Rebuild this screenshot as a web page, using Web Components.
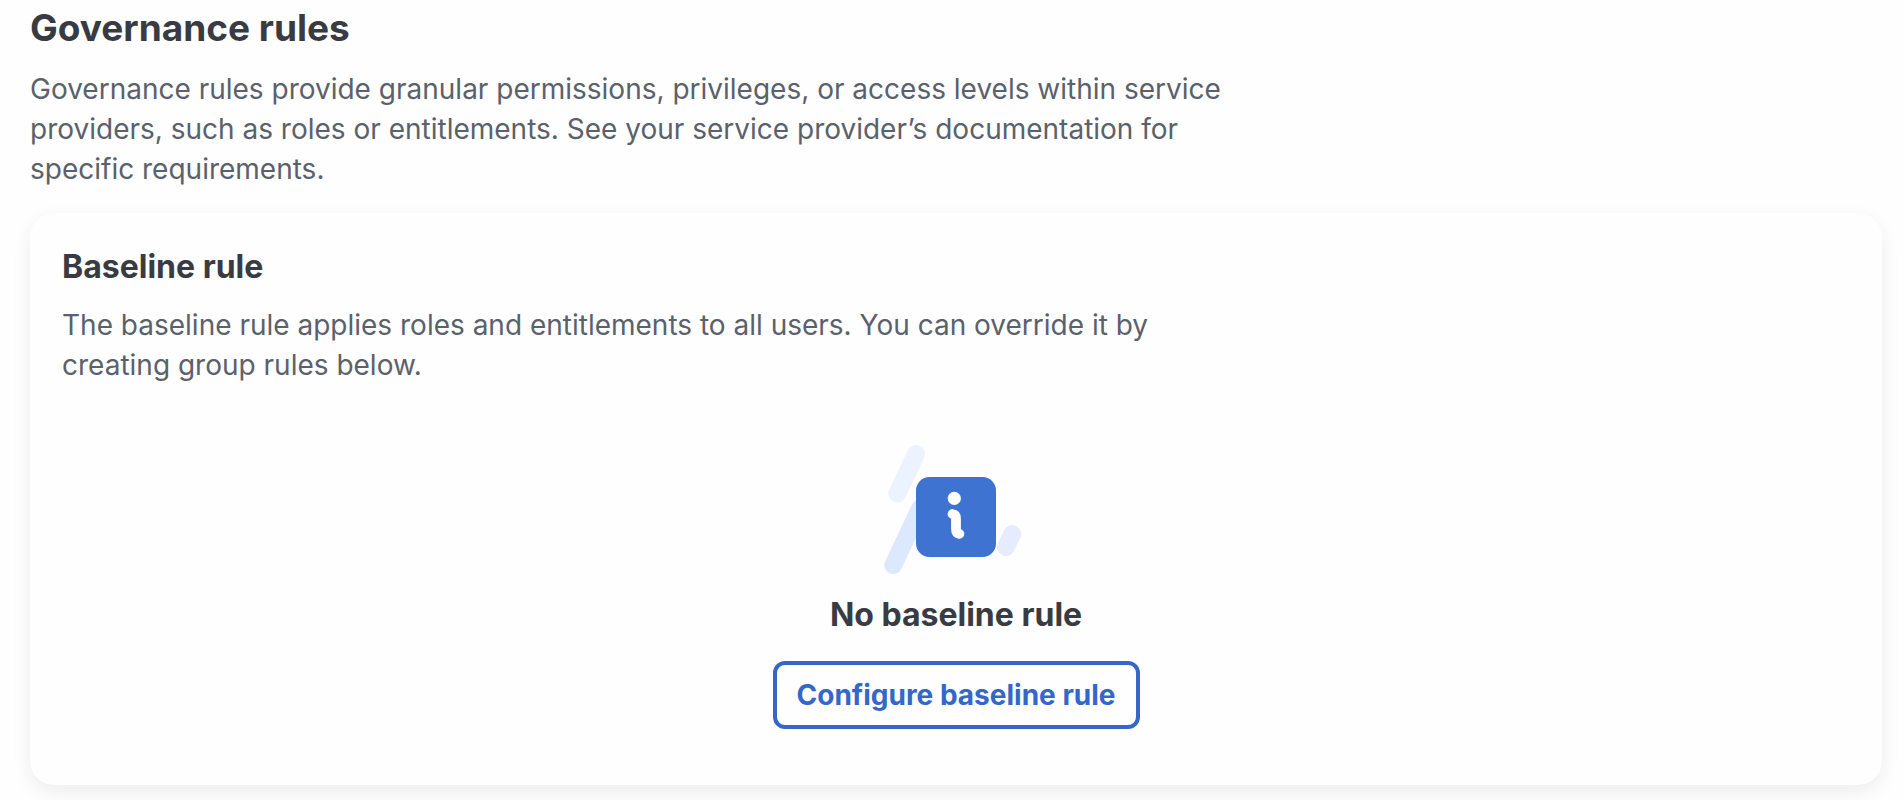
<!DOCTYPE html>
<html lang="en">
<head>
<meta charset="utf-8">
<meta name="viewport" content="width=device-width, initial-scale=1">
<title>Governance rules</title>
<style>
  body {
    margin: 0;
    background: #fefefe;
    color: #5b616b;
    font: 400 28px/40px Inter, "Liberation Sans", sans-serif;
    --heading: #393b42;
    --accent: #3467c8;
  }
</style>
</head>
<body>
<rules-section>
  <span slot="title">Governance rules</span>
  <span slot="description">Governance rules provide granular permissions, privileges, or access levels within service providers, such as roles or entitlements. See your service provider’s documentation for specific requirements.</span>
  <rule-card>
    <span slot="title">Baseline rule</span>
    <span slot="description">The baseline rule applies roles and entitlements to all users. You can override it by creating group rules below.</span>
    <empty-state>
      <info-art slot="art"></info-art>
      <span slot="title">No baseline rule</span>
      <outline-button>Configure baseline rule</outline-button>
    </empty-state>
  </rule-card>
</rules-section>

<script>
  const define = (name, html) => {
    const template = document.createElement("template");
    template.innerHTML = html;
    customElements.define(name, class extends HTMLElement {
      constructor() {
        super();
        this.attachShadow({ mode: "open" }).append(template.content.cloneNode(true));
      }
    });
  };

  define("rules-section", `
    <style>
      :host { display: block; padding: 5px 22px 40px 30px; }
      h2 { margin: 0 0 18px; color: var(--heading); font-size: 37px; line-height: 46px; font-weight: 700; }
      p { margin: 0 0 24px; max-width: 1200px; }
    </style>
    <h2><slot name="title"></slot></h2>
    <p><slot name="description"></slot></p>
    <slot></slot>`);

  define("rule-card", `
    <style>
      :host {
        display: block;
        padding: 32px 32px 56px;
        border-radius: 24px;
        background: #fefefe;
        box-shadow: 0 7px 20px rgba(0, 0, 0, 0.07);
      }
      h3 { margin: 0 0 16px; color: var(--heading); font-size: 32px; line-height: 44px; font-weight: 700; }
      p { margin: 0 0 60px; max-width: 1120px; }
    </style>
    <h3><slot name="title"></slot></h3>
    <p><slot name="description"></slot></p>
    <slot></slot>`);

  define("empty-state", `
    <style>
      :host { display: flex; flex-direction: column; align-items: center; }
      h4 { margin: 16px 0 24px; color: var(--heading); font-size: 32px; line-height: 44px; font-weight: 700; }
    </style>
    <slot name="art"></slot>
    <h4><slot name="title"></slot></h4>
    <slot></slot>`);

  define("info-art", `
    <style>
      :host { display: block; }
      svg { display: block; }
    </style>
    <svg width="144" height="132" viewBox="0 0 144 132" fill="none" stroke-linecap="round" aria-hidden="true">
      <path d="M32 9 13.4 48.3" stroke="#ecf3fe" stroke-width="18"/>
      <path d="M36 63.5 9.3 120" stroke="#dce8fd" stroke-width="18"/>
      <path d="M128.2 89 122 102" stroke="#e5ecfd" stroke-width="18"/>
      <rect x="32" y="32" width="80" height="80" rx="13.5" fill="#3e73d2"/>
      <circle cx="70.3" cy="53.4" r="6.6" fill="#fff"/>
      <path d="M68.5 69Q72 69.4 72 73.5V84Q72 88.2 75.4 88.8" stroke="#fff" stroke-width="9.8"/>
    </svg>`);

  define("outline-button", `
    <style>
      :host { display: block; }
      button {
        display: block;
        padding: 10px 20px;
        border: 4px solid var(--accent);
        border-radius: 12px;
        background: transparent;
        color: var(--accent);
        font: inherit;
        font-weight: 700;
        cursor: pointer;
      }
    </style>
    <button type="button"><slot></slot></button>`);
</script>
</body>
</html>
